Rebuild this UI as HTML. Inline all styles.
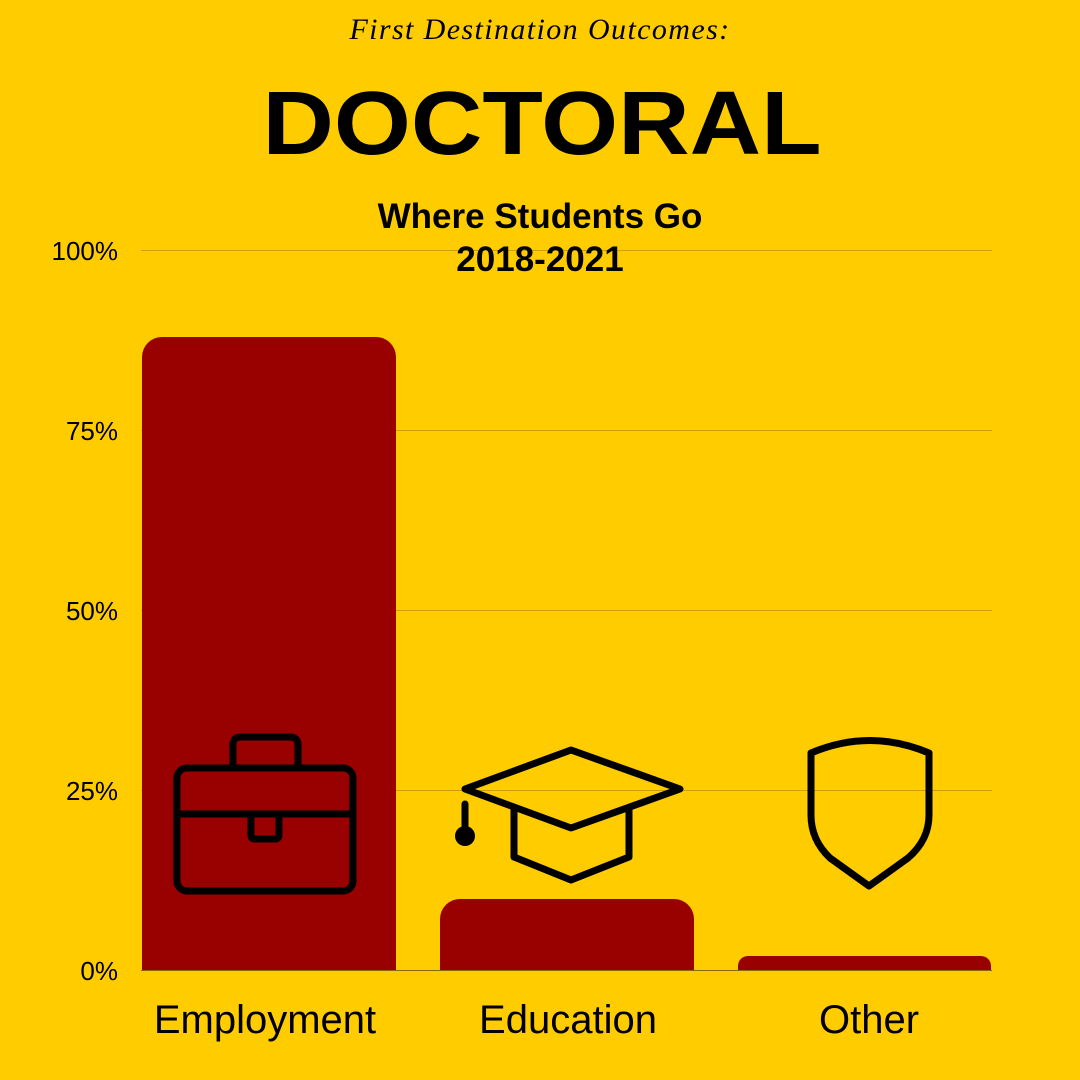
<!DOCTYPE html>
<html><head><meta charset="utf-8"><style>
html,body{margin:0;padding:0}
body{width:1080px;height:1080px;background:#FFCC00;position:relative;overflow:hidden;font-family:"Liberation Sans",sans-serif;color:#000}
.t1{position:absolute;top:13px;left:0;width:1080px;text-align:center;font-family:"Liberation Serif",serif;font-style:italic;font-size:30px;letter-spacing:1.4px}
.t2{position:absolute;top:72px;left:0;width:1084px;text-align:center;font-weight:bold;font-size:90px;line-height:105px;transform:scaleX(1.1);transform-origin:542px 0}
.t3{position:absolute;top:195px;left:0;width:1080px;text-align:center;font-weight:bold;font-size:35px;line-height:43px}
.y{position:absolute;right:962px;font-size:26px;line-height:30px}
.c{position:absolute;top:996px;font-size:40px;line-height:48px;text-align:center;width:300px}
</style></head><body>
<div class="t1">First Destination Outcomes:</div>
<div class="t2">DOCTORAL</div>
<svg width="1080" height="1080" style="position:absolute;left:0;top:0">
<g stroke="#C8A300" stroke-width="1">
<line x1="141" y1="250.5" x2="992" y2="250.5"/>
<line x1="141" y1="430.5" x2="992" y2="430.5"/>
<line x1="141" y1="610.5" x2="992" y2="610.5"/>
<line x1="141" y1="790.5" x2="992" y2="790.5"/>
</g>
<path d="M142 970V357a20 20 0 0 1 20-20h214a20 20 0 0 1 20 20v613z" fill="#990000"/>
<path d="M440 970V919a20 20 0 0 1 20-20h214a20 20 0 0 1 20 20v51z" fill="#990000"/>
<path d="M738 970V966a10 10 0 0 1 10-10h233a10 10 0 0 1 10 10v4z" fill="#990000"/>
<line x1="141" y1="970.5" x2="992" y2="970.5" stroke="#8a6a00" stroke-width="1"/>
<g fill="none" stroke="#000" stroke-width="7" stroke-linejoin="round" stroke-linecap="round">
<rect x="177" y="768" width="176" height="123" rx="10"/>
<path d="M233 767v-22q0-8 8-8h49q8 0 8 8v22"/>
<line x1="177" y1="814" x2="353" y2="814"/>
<path d="M251 815v20q0 4 4 4h20q4 0 4-4v-20"/>
<path d="M465 789L571 750L680 789L571 828Z"/>
<path d="M514 808V857L571 880L629 857V808"/>
<line x1="465" y1="804" x2="465" y2="828"/>
<path d="M811 753V815Q811 840 830 858L869 886L908 858Q929 840 929 815V753Q870 728 811 753Z"/>
</g>
<circle cx="465" cy="836" r="10" fill="#000"/>
</svg>
<div class="t3">Where Students Go<br>2018-2021</div>
<div class="y" style="top:236px">100%</div>
<div class="y" style="top:416px">75%</div>
<div class="y" style="top:596px">50%</div>
<div class="y" style="top:776px">25%</div>
<div class="y" style="top:956px">0%</div>
<div class="c" style="left:115px">Employment</div>
<div class="c" style="left:418px">Education</div>
<div class="c" style="left:719px">Other</div>
</body></html>
